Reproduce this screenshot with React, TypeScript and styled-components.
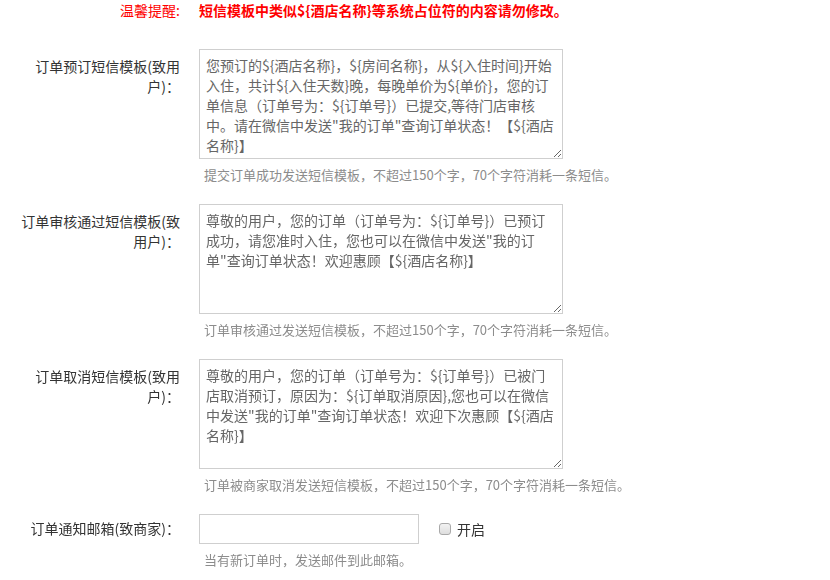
import React, { useState } from "react"
import styled, { createGlobalStyle } from "styled-components"

const GlobalStyle = createGlobalStyle`
  html, body {
    margin: 0;
    padding: 0;
    background: #fff;
  }
  body {
    font-family: "Noto Sans CJK SC", "Noto Sans", sans-serif;
    font-size: 14px;
    color: #333;
  }
`

const Form = styled.div`
  padding-top: 0;
  width: 830px;
`

const Row = styled.div<{ $gap?: number }>`
  display: flex;
  align-items: flex-start;
  margin-bottom: ${(p) => p.$gap ?? 21}px;
`

const Label = styled.div<{ $top?: number; $warn?: boolean }>`
  width: 160px;
  margin-left: 20px;
  padding-top: ${(p) => p.$top ?? 0}px;
  text-align: right;
  font-size: 14px;
  line-height: 20px;
  color: ${(p) => (p.$warn ? "#ff0000" : "#333")};
  flex-shrink: 0;
`

const Field = styled.div`
  margin-left: 19px;
  display: flex;
  flex-direction: column;
`

const WarnText = styled.div`
  color: #ff0000;
  font-weight: bold;
  font-size: 14px;
  line-height: 20px;
`

const TemplateArea = styled.textarea`
  display: block;
  box-sizing: border-box;
  width: 364px;
  height: 110px;
  margin: 0;
  padding: 5px 6px;
  border: 1px solid #cfcfcf;
  border-radius: 0;
  font-family: "Noto Sans CJK SC", "Noto Sans", sans-serif;
  font-size: 14px;
  line-height: 20px;
  color: #666;
  outline: none;
  resize: both;
`

const Hint = styled.div`
  margin-top: 7px;
  padding-left: 5px;
  font-size: 13px;
  line-height: 17px;
  color: #8c8c8c;
  white-space: nowrap;
`

const InputLine = styled.div`
  display: flex;
  align-items: center;
`

const MailInput = styled.input`
  box-sizing: border-box;
  width: 220px;
  height: 30px;
  margin: 0;
  padding: 0 6px;
  border: 1px solid #cfcfcf;
  font-family: "Noto Sans CJK SC", "Noto Sans", sans-serif;
  font-size: 14px;
  color: #555;
  outline: none;
`

const Check = styled.input`
  appearance: none;
  box-sizing: border-box;
  width: 12px;
  height: 12px;
  margin: 0 6px 0 20px;
  border: 1px solid #a9a9a9;
  border-radius: 3px;
  background: linear-gradient(#f2f2f2, #dedede);
  cursor: pointer;
  &:checked {
    background: #3c8dde;
    border-color: #2f74b9;
  }
`

const CheckText = styled.span`
  font-size: 14px;
  line-height: 20px;
  color: #333;
`

const templates = [
  {
    label: "订单预订短信模板(致用户)：",
    value:
      "您预订的${酒店名称}，${房间名称}，从${入住时间}开始入住，共计${入住天数}晚，每晚单价为${单价}，您的订单信息（订单号为：${订单号}）已提交,等待门店审核中。请在微信中发送\"我的订单\"查询订单状态！【${酒店名称}】",
    hint: "提交订单成功发送短信模板，不超过150个字，70个字符消耗一条短信。",
  },
  {
    label: "订单审核通过短信模板(致用户)：",
    value:
      "尊敬的用户，您的订单（订单号为：${订单号}）已预订成功，请您准时入住，您也可以在微信中发送\"我的订单\"查询订单状态！欢迎惠顾【${酒店名称}】",
    hint: "订单审核通过发送短信模板，不超过150个字，70个字符消耗一条短信。",
  },
  {
    label: "订单取消短信模板(致用户)：",
    value:
      "尊敬的用户，您的订单（订单号为：${订单号}）已被门店取消预订，原因为：${订单取消原因},您也可以在微信中发送\"我的订单\"查询订单状态！欢迎下次惠顾【${酒店名称}】",
    hint: "订单被商家取消发送短信模板，不超过150个字，70个字符消耗一条短信。",
  },
]

const App = () => {
  const [values, setValues] = useState(templates.map((t) => t.value))
  const [mail, setMail] = useState("")
  const [enabled, setEnabled] = useState(false)

  return (
    <>
      <GlobalStyle />
      <Form>
        <Row $gap={29}>
          <Label $warn>温馨提醒:</Label>
          <Field>
            <WarnText>{"短信模板中类似${酒店名称}等系统占位符的内容请勿修改。"}</WarnText>
          </Field>
        </Row>

        {templates.map((t, i) => (
          <Row key={t.label}>
            <Label $top={7}>{t.label}</Label>
            <Field>
              <TemplateArea
                value={values[i]}
                onChange={(e) =>
                  setValues((prev) =>
                    prev.map((v, j) => (j === i ? e.target.value : v)),
                  )
                }
              />
              <Hint>{t.hint}</Hint>
            </Field>
          </Row>
        ))}

        <Row>
          <Label $top={4}>订单通知邮箱(致商家)：</Label>
          <Field>
            <InputLine>
              <MailInput value={mail} onChange={(e) => setMail(e.target.value)} />
              <Check
                type="checkbox"
                checked={enabled}
                onChange={(e) => setEnabled(e.target.checked)}
              />
              <CheckText>开启</CheckText>
            </InputLine>
            <Hint>当有新订单时，发送邮件到此邮箱。</Hint>
          </Field>
        </Row>
      </Form>
    </>
  )
}

export default App
